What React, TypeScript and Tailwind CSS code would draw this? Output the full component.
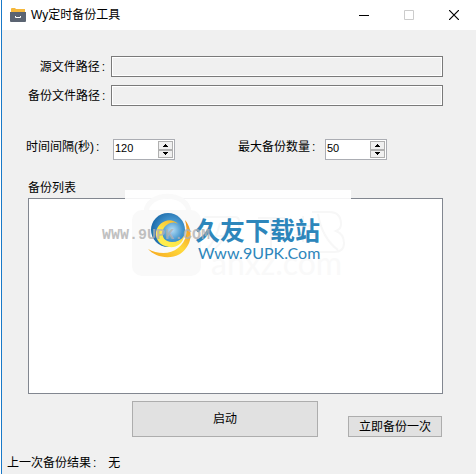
import { useState } from "react";

function Spinner({ id, initial }: { id: string; initial: number }) {
  const [value, setValue] = useState(initial);
  return (
    <div className="flex h-[21px] border border-[#abadb3] bg-white">
      <input
        id={id}
        type="number"
        value={value}
        onChange={(e) => setValue(Number(e.target.value))}
        className="h-4 w-11 min-w-0 [appearance:textfield] bg-transparent pl-px font-['Liberation_Sans',sans-serif] text-[11px] leading-4 outline-none [&::-webkit-inner-spin-button]:appearance-none"
      />
      <div className="flex w-4 flex-col py-px pr-px">
        <button
          type="button"
          aria-label="增加"
          onClick={() => setValue(value + 1)}
          className="flex flex-1 items-center justify-center border border-[#b0b0b0] bg-[#f0f0f0]"
        >
          <svg width="5" height="3" viewBox="0 0 5 3" shapeRendering="crispEdges">
            <path d="M2 0h1v1h1v1h1v1H0V2h1V1h1z" />
          </svg>
        </button>
        <button
          type="button"
          aria-label="减少"
          onClick={() => setValue(value - 1)}
          className="flex flex-1 items-center justify-center border border-[#b0b0b0] bg-[#f0f0f0]"
        >
          <svg width="5" height="3" viewBox="0 0 5 3" shapeRendering="crispEdges">
            <path d="M0 0h5v1H4v1H3v1H2V2H1V1H0z" />
          </svg>
        </button>
      </div>
    </div>
  );
}

function Caption({ text }: { text: string }) {
  return (
    <>
      {text}
      <span className="pl-[2px]">:</span>
    </>
  );
}

function PathField({ id, label }: { id: string; label: string }) {
  return (
    <div className="flex items-center">
      <label htmlFor={id} className="w-[83px] shrink-0 pr-[6px] text-right whitespace-nowrap">
        <Caption text={label} />
      </label>
      <input
        id={id}
        type="text"
        readOnly
        className="h-[21px] min-w-0 flex-1 border border-[#7a7a7a] bg-[#f0f0f0] px-1 shadow-[inset_0_0_0_1px_white] outline-none"
      />
    </div>
  );
}

function Watermark() {
  return (
    <svg
      className="pointer-events-none absolute -top-[9px] left-[71px]"
      width="252"
      height="92"
      viewBox="100 190 252 92"
      aria-hidden="true"
    >
      <defs>
        <radialGradient id="globe" cx="0.62" cy="0.5" r="0.6">
          <stop offset="0" stopColor="#b5def5" />
          <stop offset="0.5" stopColor="#4596cf" />
          <stop offset="1" stopColor="#1d6cab" />
        </radialGradient>
        <linearGradient id="swoosh" x1="0" y1="1" x2="1" y2="0">
          <stop offset="0" stopColor="#f6a51e" />
          <stop offset="0.5" stopColor="#ffd93c" />
          <stop offset="1" stopColor="#ee8b1c" />
        </linearGradient>
        <linearGradient id="crescent" x1="1" y1="0" x2="0.3" y2="1">
          <stop offset="0" stopColor="#f5a81f" />
          <stop offset="0.6" stopColor="#ffe54a" />
          <stop offset="1" stopColor="#fff04e" />
        </linearGradient>
      </defs>
      <rect x="125" y="190" width="226" height="90" fill="white" fillOpacity="0.9" />
      <g fill="#f9f9f9">
        <rect x="132" y="210" width="69" height="66" rx="10" />
        <path d="M146 212C148 191 187 191 189 212" fill="none" stroke="#f9f9f9" strokeWidth="5" />
        <text x="211" y="275" fontSize="32" fontFamily="Lato, sans-serif">
          anxz.com
        </text>
      </g>
      <g fill="none" stroke="#f7f7f7" strokeWidth="2">
        <path d="M203 228v-7q0-4 4-4h28q4 0 4 4v7M211 236h24M220 223q-4 18-14 27M227 226q-2 18-19 27M258 218h27M271 218v33M276 229l9 8" />
        <path d="M293 226h20M303 216v26M294 235h21M318 214q4 24 20 36M312 212h17q12 0 12 12 0 5-5 7 8 3 8 12 0 9-10 9h-17" />
      </g>
      <circle cx="168" cy="230" r="17" fill="url(#globe)" />
      <path
        d="M185 220C194 231 192 246 180 254C169 260 155 257 148 249C157 254 170 255 178 248C187 241 188 231 185 220Z"
        fill="url(#swoosh)"
      />
      <path
        d="M178 224C173 220 165 224 163 230C161 237 165 242 172 242C177 242 181 240 184 236C183 244 176 248 169 247C160 246 155 239 156 232C158 222 170 216 178 224Z"
        fill="url(#crescent)"
      />
      <g fill="#2d86bb">
        <text x="195" y="240" fontSize="25" fontWeight="700" fontFamily="'Noto Sans CJK SC', sans-serif">
          久友下载站
        </text>
        <text x="198" y="259" fontSize="16" fontFamily="Lato, sans-serif">
          Www.9UPK.Com
        </text>
      </g>
      <text
        x="102"
        y="239"
        fontSize="15"
        fontWeight="700"
        fill="#b0b0b0"
        fillOpacity="0.8"
        fontFamily="'Liberation Mono', monospace"
      >
        WWW.9UPK.COM
      </text>
    </svg>
  );
}

export default function App() {
  return (
    <div lang="zh-CN" className="flex min-h-screen flex-col bg-white pl-px font-['Liberation_Sans','Noto_Sans_CJK_SC',sans-serif] text-xs leading-4 text-black">
      <div className="flex flex-1 flex-col border-l border-[#1979c8] bg-[#f0f0f0]">
        <header className="flex h-[30px] items-center bg-white pl-2">
          <svg width="16" height="14" viewBox="0 0 16 14" aria-hidden="true">
            <path d="M1 4V1Q1 0 2 0H5L6 1H15V5H1z" fill="#f5b83d" />
            <path d="M0 4h16v9q0 1-1 1H1Q0 14 0 13z" fill="#5b6472" />
            <path d="M5.500 8v1.500h5V8" fill="none" stroke="white" />
          </svg>
          <h1 className="ml-[5px] flex-1">Wy定时备份工具</h1>
          <button type="button" aria-label="最小化" className="flex h-7 w-[45px] items-center justify-center">
            <svg width="10" height="10" viewBox="0 0 10 10" fill="none" stroke="black">
              <path d="M0 5.500h10" />
            </svg>
          </button>
          <button type="button" aria-label="最大化" disabled className="flex h-7 w-[45px] items-center justify-center">
            <svg width="10" height="10" viewBox="0 0 10 10" fill="none" stroke="#cccccc">
              <path d="M.5.5h9v9h-9z" />
            </svg>
          </button>
          <button type="button" aria-label="关闭" className="flex h-7 w-[45px] items-center justify-center">
            <svg width="10" height="10" viewBox="0 0 10 10" fill="none" stroke="black" strokeWidth="1.2">
              <path d="M0 0l10 10M10 0L0 10" />
            </svg>
          </button>
        </header>

        <main className="flex flex-1 flex-col pr-[33px] pl-[26px]">
          <div className="mt-[26px] flex flex-col gap-2">
            <PathField id="source" label="源文件路径" />
            <PathField id="backup" label="备份文件路径" />
          </div>

          <div className="mt-[33px] -ml-[2px] grid grid-cols-[212px_1fr]">
            <div className="flex items-start">
              <label htmlFor="interval" className="w-[87px] whitespace-nowrap">
                <Caption text="时间间隔(秒)" />
              </label>
              <Spinner id="interval" initial={120} />
            </div>
            <div className="flex items-start">
              <label htmlFor="limit" className="w-[87px] whitespace-nowrap">
                <Caption text="最大备份数量" />
              </label>
              <Spinner id="limit" initial={50} />
            </div>
          </div>

          <h2 className="mt-5">备份列表</h2>
          <div className="relative mt-[2px] min-h-[196px] flex-1 border border-[#828790] bg-white">
            <Watermark />
          </div>

          <div className="mt-[7px] flex items-end justify-end gap-[30px] pr-px">
            <button type="button" className="h-9 w-[186px] border border-[#adadad] bg-[#e1e1e1]">
              启动
            </button>
            <button type="button" className="h-[21px] w-[94px] border border-[#adadad] bg-[#e1e1e1] leading-[18px]">
              立即备份一次
            </button>
          </div>
        </main>

        <footer className="mt-[18px] flex gap-3 pb-[3px] pl-[5px]">
          <span>
            <Caption text="上一次备份结果" />
          </span>
          <output>无</output>
        </footer>
      </div>
    </div>
  );
}
